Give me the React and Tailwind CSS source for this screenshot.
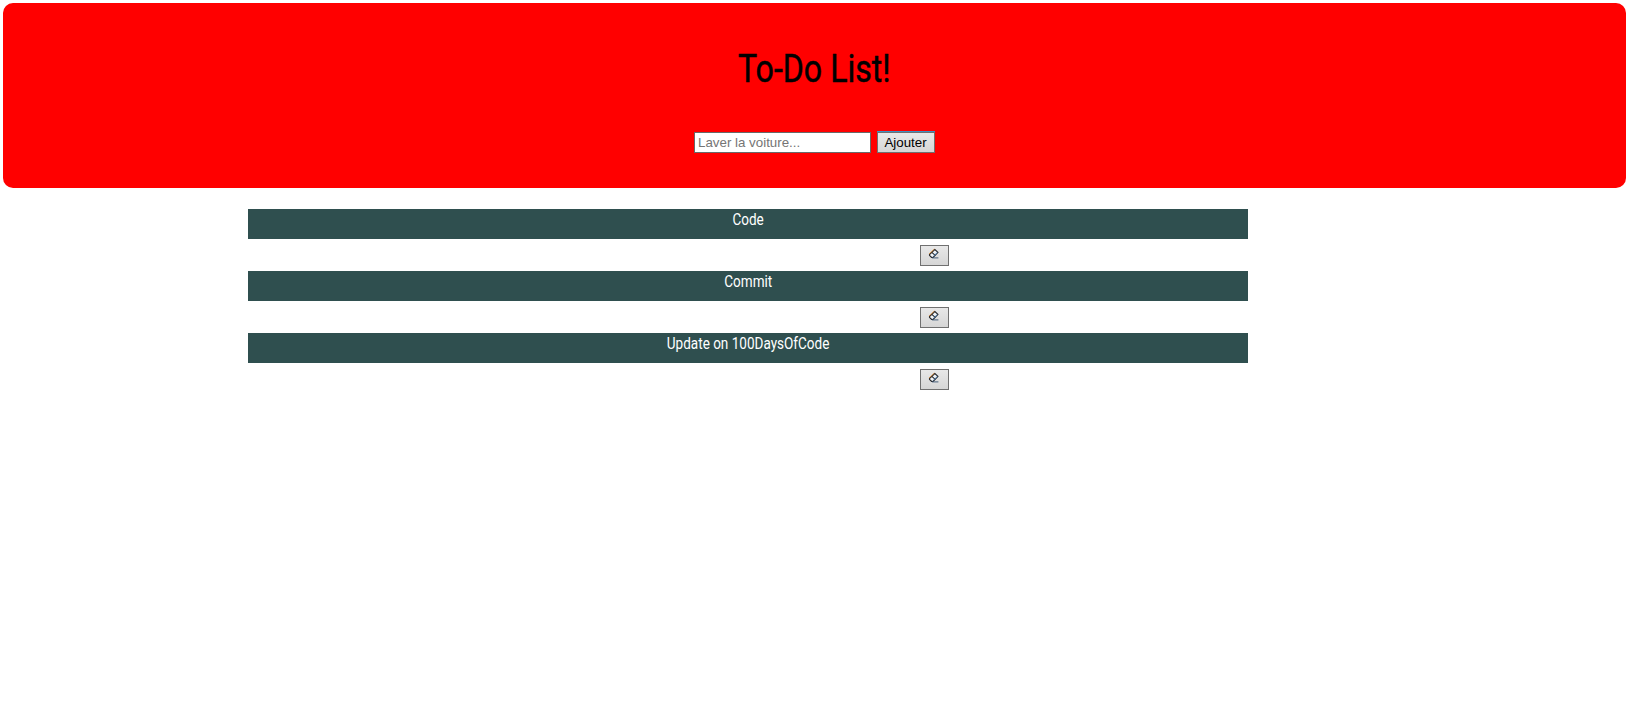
const tasks = ['Code', 'Commit', 'Update on 100DaysOfCode'];

function EraserIcon() {
  return (
    <svg width="12" height="12" viewBox="0 0 12 12" fill="none" strokeLinejoin="round">
      <path d="M1.5 6.5 L6.8 1.5 L10 4.4 L4.9 9.5 H3.7 L1.5 7.4 Z" fill="#f1f4f7" stroke="#26272b" strokeWidth="1.1" />
      <path d="M3.8 4.3 L7.2 7.3" stroke="#26272b" strokeWidth="1.1" />
      <path d="M1 6.1 L6.4 1" stroke="#e08a30" strokeWidth="0.8" />
      <path d="M5.5 8.2 L9.4 4.4" stroke="#4a97e0" strokeWidth="0.7" />
      <path d="M4 9.9 H10.4" stroke="#34506e" strokeWidth="0.9" />
    </svg>
  );
}

function Task({ label }) {
  return (
    <li className="h-[62px]">
      <div className="flex h-[30px] justify-center bg-[#2f4f4f] text-white">
        <span className="inline-block scale-x-[0.82] text-[16.5px] leading-[22px] whitespace-nowrap">{label}</span>
      </div>
      <button
        aria-label="Effacer"
        className="mt-[6px] ml-[672px] flex h-[21px] w-[29px] items-start border border-[#707070] bg-linear-to-b from-[#e8e8e8] to-[#d6d6d6] pt-[2px] pl-[7px]"
      >
        <EraserIcon />
      </button>
    </li>
  );
}

export default function App() {
  return (
    <main className="min-h-screen bg-white p-[3px] font-['Roboto',sans-serif]">
      <header className="flex h-[185px] flex-col items-center rounded-[10px] bg-[#ff0000]">
        <h1 className="mt-[43px] scale-x-[0.845] text-[38px] leading-[46px] whitespace-nowrap text-black [-webkit-text-stroke:0.5px_black]">
          To-Do List!
        </h1>
        <form className="mt-[40px] flex items-end gap-[6px] font-['Liberation_Sans',sans-serif] text-[13.333px]">
          <input
            placeholder="Laver la voiture..."
            className="h-[21px] w-[177px] border border-[#696969] bg-white px-[3px] placeholder:text-[#757575]"
          />
          <button
            type="button"
            className="h-[21px] w-[58px] border border-[#707070] bg-linear-to-b from-[#e8e8e8] to-[#d6d6d6] pr-px text-black shadow-[0_-1px_0_#3f8fc4]"
          >
            Ajouter
          </button>
        </form>
      </header>
      <ul className="mt-[21px] ml-[245px] w-[1000px]">
        {tasks.map((label) => (
          <Task key={label} label={label} />
        ))}
      </ul>
    </main>
  );
}
